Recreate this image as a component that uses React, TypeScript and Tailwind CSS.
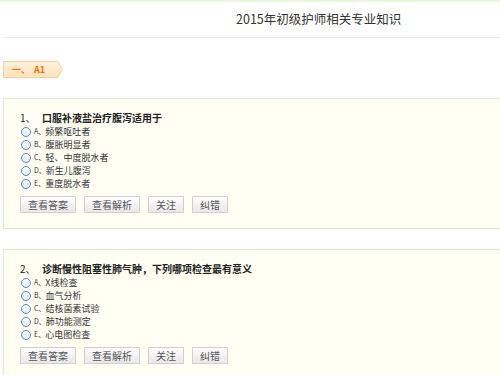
import React from "react";

const cjk = { fontFamily: '"Noto Sans CJK SC", "Liberation Sans", sans-serif' };

type Q = { n: string; title: string; opts: string[] };

const questions: Q[] = [
  { n: "1", title: "口服补液盐治疗腹泻适用于", opts: ["频繁呕吐者", "腹胀明显者", "轻、中度脱水者", "新生儿腹泻", "重度脱水者"] },
  { n: "2", title: "诊断慢性阻塞性肺气肿，下列哪项检查最有意义", opts: ["X线检查", "血气分析", "结核菌素试验", "肺功能测定", "心电图检查"] },
];

const letters = ["A", "B", "C", "D", "E"];

function Radio() {
  return (
    <span className="inline-block w-[10px] h-[10px] rounded-full border border-[#5a86c8] bg-gradient-to-b from-[#ffffff] to-[#dfe8f5] shrink-0" />
  );
}

function Btn({ label }: { label: string }) {
  return (
    <button className="h-[17px] px-[7px] border border-[#cfcfcf] bg-gradient-to-b from-[#ffffff] to-[#e8e8e8] text-[10px] leading-[15px] text-[#555] rounded-[1px]">
      {label}
    </button>
  );
}

function Card({ q }: { q: Q }) {
  return (
    <div className="ml-[3px] border border-r-0 border-[#d6efcc] bg-[#fffff4] pl-[16px] pt-[11px] pb-[15px]">
      <div className="flex items-center h-[14px] text-[10px] font-bold text-[#222]">
        <span className="w-[22px] font-normal">{q.n}、</span>
        <span>{q.title}</span>
      </div>
      <div className="flex flex-col pt-[1px]">
        {q.opts.map((o, i) => (
          <div key={i} className="flex items-center h-[13px] pl-[1px]">
            <Radio />
            <span className="ml-[3px] text-[7px] text-[#333] whitespace-nowrap">{letters[i]}、</span>
            <span className="text-[9px] text-[#333] whitespace-nowrap">{o}</span>
          </div>
        ))}
      </div>
      <div className="flex gap-[8px] mt-[6px]">
        <Btn label="查看答案" />
        <Btn label="查看解析" />
        <Btn label="关注" />
        <Btn label="纠错" />
      </div>
    </div>
  );
}

export default function App() {
  return (
    <div className="w-[500px] h-[375px] overflow-hidden bg-white border-t-2 border-[#e6f7de]" style={cjk}>
      <div className="ml-[3px] h-[36px] border-b border-[#ececec] flex items-center pl-[233px]">
        <span className="text-[12.5px] text-[#333] leading-none">2015年初级护师相关专业知识</span>
      </div>
      <div className="h-[60px] pt-[23px]">
        <div className="relative ml-[3px] w-[60px] h-[17px]">
          <svg className="absolute inset-0" width="60" height="17" viewBox="0 0 60 17">
            <defs>
              <linearGradient id="bg" x1="0" y1="0" x2="0" y2="1">
                <stop offset="0" stopColor="#fff1dc" />
                <stop offset="1" stopColor="#fde2bc" />
              </linearGradient>
            </defs>
            <polygon points="0.5,0.5 54.5,0.5 59.5,8.5 54.5,16.5 0.5,16.5" fill="url(#bg)" stroke="#f4cf9f" />
          </svg>
          <div className="relative flex items-center h-full pl-[9px] text-[9px] font-bold text-[#ff6a00]">
            <span>一、</span>
            <span className="ml-[4px]">A1</span>
          </div>
        </div>
      </div>
      <div className="flex flex-col gap-[20px]">
        {questions.map((q) => (
          <Card key={q.n} q={q} />
        ))}
      </div>
    </div>
  );
}
